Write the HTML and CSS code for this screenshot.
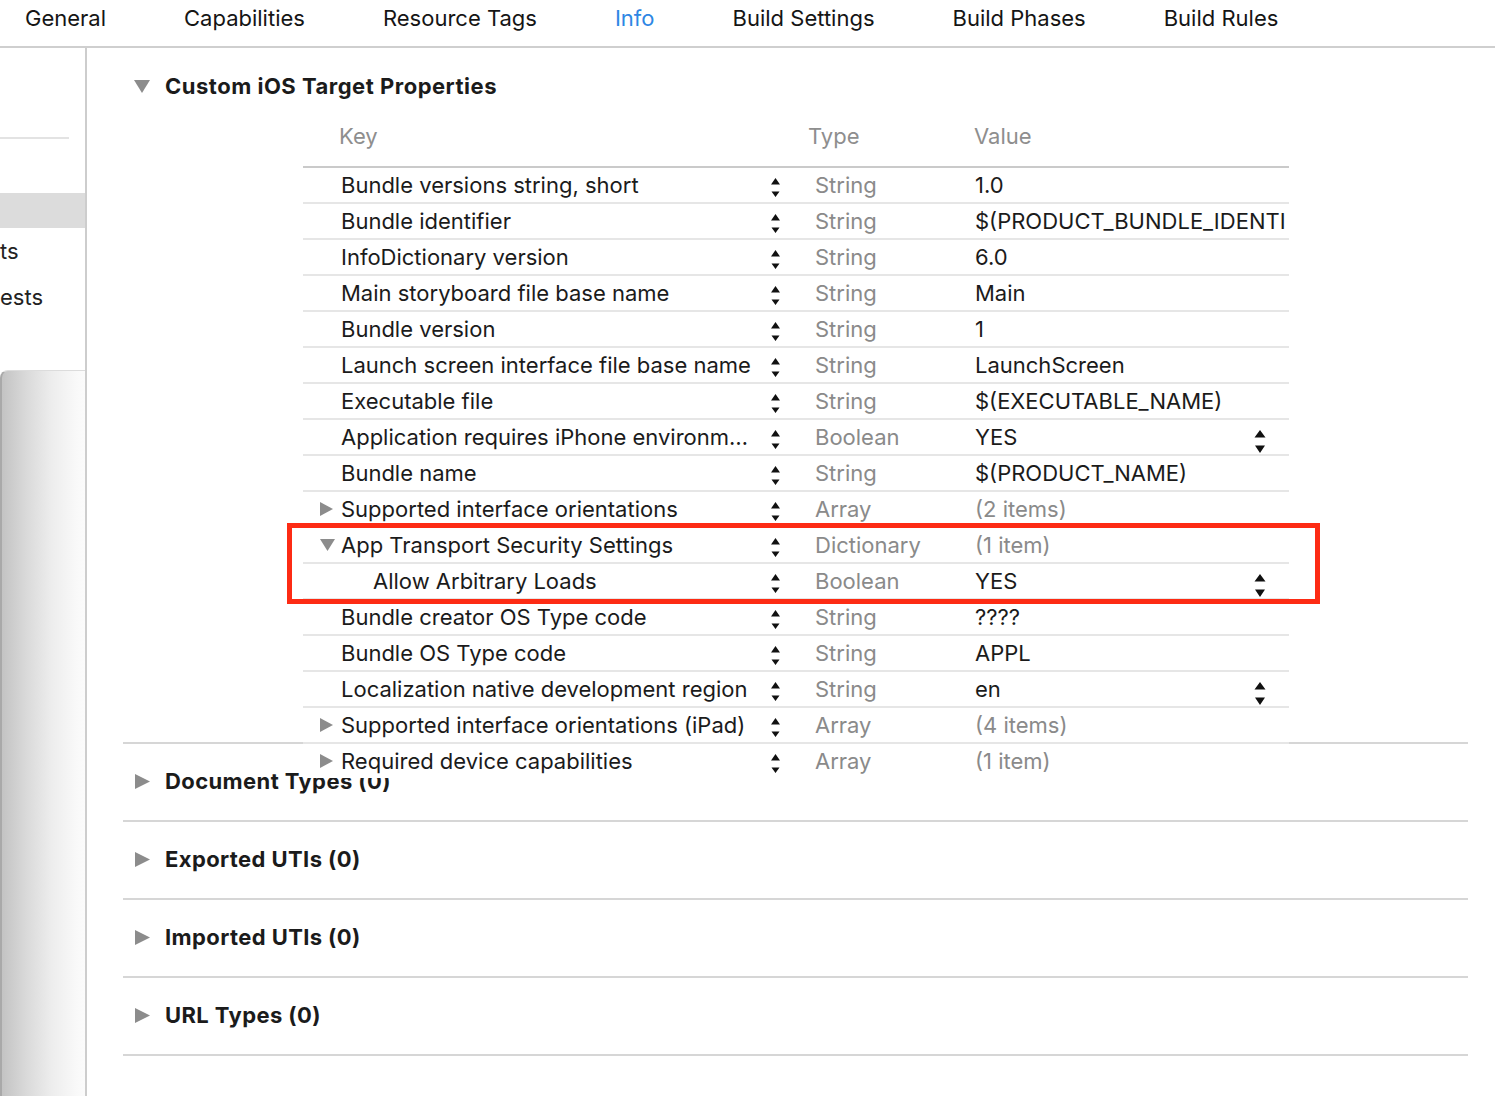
FILE: index.html
```html
<!DOCTYPE html>
<html>
<head>
<meta charset="utf-8">
<link rel="stylesheet" href="styles.css">
</head>
<body>
<div class="tabs">
  <span class="tab">General</span>
  <span class="tab">Capabilities</span>
  <span class="tab">Resource Tags</span>
  <span class="tab active">Info</span>
  <span class="tab">Build Settings</span>
  <span class="tab">Build Phases</span>
  <span class="tab">Build Rules</span>
</div>
<div class="main">
  <aside class="sidebar">
    <div class="sb-rule"></div>
    <div class="sb-selected"></div>
    <div class="sb-item">ts</div>
    <div class="sb-item">ests</div>
    <div class="sb-panel"></div>
  </aside>
  <section class="content">
    <div class="custom">
      <div class="sec-head">
        <svg class="disc-big" width="16" height="13" viewBox="0 0 16 13"><path d="M0 0H16L8 13Z" fill="#8c8c8c"/></svg>
        <span>Custom iOS Target Properties</span>
      </div>
      <div class="plist">
        <div class="plist-head">
          <span class="h-key">Key</span>
          <span class="h-type">Type</span>
          <span class="h-value">Value</span>
        </div>
        <div class="row"><div class="key"><i class="slot"></i>Bundle versions string, short</div><div class="stp"><svg width="9" height="19" viewBox="0 0 9 19"><path d="M0 6.5L4.5 0L9 6.5Z M0.5 13.5L4.5 19L8.5 13.5Z" fill="#111"/></svg></div><div></div><div class="type">String</div><div class="val"><span class="vt">1.0</span></div></div>
        <div class="row"><div class="key"><i class="slot"></i>Bundle identifier</div><div class="stp"><svg width="9" height="19" viewBox="0 0 9 19"><path d="M0 6.5L4.5 0L9 6.5Z M0.5 13.5L4.5 19L8.5 13.5Z" fill="#111"/></svg></div><div></div><div class="type">String</div><div class="val"><span class="vt">$(PRODUCT_BUNDLE_IDENTI</span></div></div>
        <div class="row"><div class="key"><i class="slot"></i>InfoDictionary version</div><div class="stp"><svg width="9" height="19" viewBox="0 0 9 19"><path d="M0 6.5L4.5 0L9 6.5Z M0.5 13.5L4.5 19L8.5 13.5Z" fill="#111"/></svg></div><div></div><div class="type">String</div><div class="val"><span class="vt">6.0</span></div></div>
        <div class="row"><div class="key"><i class="slot"></i>Main storyboard file base name</div><div class="stp"><svg width="9" height="19" viewBox="0 0 9 19"><path d="M0 6.5L4.5 0L9 6.5Z M0.5 13.5L4.5 19L8.5 13.5Z" fill="#111"/></svg></div><div></div><div class="type">String</div><div class="val"><span class="vt">Main</span></div></div>
        <div class="row"><div class="key"><i class="slot"></i>Bundle version</div><div class="stp"><svg width="9" height="19" viewBox="0 0 9 19"><path d="M0 6.5L4.5 0L9 6.5Z M0.5 13.5L4.5 19L8.5 13.5Z" fill="#111"/></svg></div><div></div><div class="type">String</div><div class="val"><span class="vt">1</span></div></div>
        <div class="row"><div class="key"><i class="slot"></i>Launch screen interface file base name</div><div class="stp"><svg width="9" height="19" viewBox="0 0 9 19"><path d="M0 6.5L4.5 0L9 6.5Z M0.5 13.5L4.5 19L8.5 13.5Z" fill="#111"/></svg></div><div></div><div class="type">String</div><div class="val"><span class="vt">LaunchScreen</span></div></div>
        <div class="row"><div class="key"><i class="slot"></i>Executable file</div><div class="stp"><svg width="9" height="19" viewBox="0 0 9 19"><path d="M0 6.5L4.5 0L9 6.5Z M0.5 13.5L4.5 19L8.5 13.5Z" fill="#111"/></svg></div><div></div><div class="type">String</div><div class="val"><span class="vt">$(EXECUTABLE_NAME)</span></div></div>
        <div class="row"><div class="key"><i class="slot"></i>Application requires iPhone environm…</div><div class="stp"><svg width="9" height="19" viewBox="0 0 9 19"><path d="M0 6.5L4.5 0L9 6.5Z M0.5 13.5L4.5 19L8.5 13.5Z" fill="#111"/></svg></div><div></div><div class="type">Boolean</div><div class="val"><span class="vt">YES</span><svg class="vstp" width="12" height="23" viewBox="0 0 12 23"><path d="M0.5 7.5L6 0L11.5 7.5Z M1 15.5L6 23L11 15.5Z" fill="#111"/></svg></div></div>
        <div class="row"><div class="key"><i class="slot"></i>Bundle name</div><div class="stp"><svg width="9" height="19" viewBox="0 0 9 19"><path d="M0 6.5L4.5 0L9 6.5Z M0.5 13.5L4.5 19L8.5 13.5Z" fill="#111"/></svg></div><div></div><div class="type">String</div><div class="val"><span class="vt">$(PRODUCT_NAME)</span></div></div>
        <div class="row"><div class="key"><i class="slot"><svg width="13" height="14" viewBox="0 0 13 14"><path d="M0 0L13 7L0 14Z" fill="#8c8c8c"/></svg></i>Supported interface orientations</div><div class="stp"><svg width="9" height="19" viewBox="0 0 9 19"><path d="M0 6.5L4.5 0L9 6.5Z M0.5 13.5L4.5 19L8.5 13.5Z" fill="#111"/></svg></div><div></div><div class="type">Array</div><div class="val dim"><span class="vt">(2 items)</span></div></div>
        <div class="row"><div class="key"><i class="slot"><svg width="15" height="12" viewBox="0 0 15 12"><path d="M0 0H15L7.5 12Z" fill="#8c8c8c"/></svg></i>App Transport Security Settings</div><div class="stp"><svg width="9" height="19" viewBox="0 0 9 19"><path d="M0 6.5L4.5 0L9 6.5Z M0.5 13.5L4.5 19L8.5 13.5Z" fill="#111"/></svg></div><div></div><div class="type">Dictionary</div><div class="val dim"><span class="vt">(1 item)</span></div></div>
        <div class="row"><div class="key child">Allow Arbitrary Loads</div><div class="stp"><svg width="9" height="19" viewBox="0 0 9 19"><path d="M0 6.5L4.5 0L9 6.5Z M0.5 13.5L4.5 19L8.5 13.5Z" fill="#111"/></svg></div><div></div><div class="type">Boolean</div><div class="val"><span class="vt">YES</span><svg class="vstp" width="12" height="23" viewBox="0 0 12 23"><path d="M0.5 7.5L6 0L11.5 7.5Z M1 15.5L6 23L11 15.5Z" fill="#111"/></svg></div></div>
        <div class="row"><div class="key"><i class="slot"></i>Bundle creator OS Type code</div><div class="stp"><svg width="9" height="19" viewBox="0 0 9 19"><path d="M0 6.5L4.5 0L9 6.5Z M0.5 13.5L4.5 19L8.5 13.5Z" fill="#111"/></svg></div><div></div><div class="type">String</div><div class="val"><span class="vt">????</span></div></div>
        <div class="row"><div class="key"><i class="slot"></i>Bundle OS Type code</div><div class="stp"><svg width="9" height="19" viewBox="0 0 9 19"><path d="M0 6.5L4.5 0L9 6.5Z M0.5 13.5L4.5 19L8.5 13.5Z" fill="#111"/></svg></div><div></div><div class="type">String</div><div class="val"><span class="vt">APPL</span></div></div>
        <div class="row"><div class="key"><i class="slot"></i>Localization native development region</div><div class="stp"><svg width="9" height="19" viewBox="0 0 9 19"><path d="M0 6.5L4.5 0L9 6.5Z M0.5 13.5L4.5 19L8.5 13.5Z" fill="#111"/></svg></div><div></div><div class="type">String</div><div class="val"><span class="vt">en</span><svg class="vstp" width="12" height="23" viewBox="0 0 12 23"><path d="M0.5 7.5L6 0L11.5 7.5Z M1 15.5L6 23L11 15.5Z" fill="#111"/></svg></div></div>
        <div class="row"><div class="key"><i class="slot"><svg width="13" height="14" viewBox="0 0 13 14"><path d="M0 0L13 7L0 14Z" fill="#8c8c8c"/></svg></i>Supported interface orientations (iPad)</div><div class="stp"><svg width="9" height="19" viewBox="0 0 9 19"><path d="M0 6.5L4.5 0L9 6.5Z M0.5 13.5L4.5 19L8.5 13.5Z" fill="#111"/></svg></div><div></div><div class="type">Array</div><div class="val dim"><span class="vt">(4 items)</span></div></div>
        <div class="row last"><div class="key"><i class="slot"><svg width="13" height="14" viewBox="0 0 13 14"><path d="M0 0L13 7L0 14Z" fill="#8c8c8c"/></svg></i>Required device capabilities</div><div class="stp"><svg width="9" height="19" viewBox="0 0 9 19"><path d="M0 6.5L4.5 0L9 6.5Z M0.5 13.5L4.5 19L8.5 13.5Z" fill="#111"/></svg></div><div></div><div class="type">Array</div><div class="val dim"><span class="vt">(1 item)</span></div></div>
        <div class="highlight"></div>
      </div>
    </div>
    <div class="sec"><svg width="15" height="15" viewBox="0 0 15 15"><path d="M0 0L15 7.5L0 15Z" fill="#8c8c8c"/></svg><span>Document Types (0)</span></div>
    <div class="sec"><svg width="15" height="15" viewBox="0 0 15 15"><path d="M0 0L15 7.5L0 15Z" fill="#8c8c8c"/></svg><span>Exported UTIs (0)</span></div>
    <div class="sec"><svg width="15" height="15" viewBox="0 0 15 15"><path d="M0 0L15 7.5L0 15Z" fill="#8c8c8c"/></svg><span>Imported UTIs (0)</span></div>
    <div class="sec"><svg width="15" height="15" viewBox="0 0 15 15"><path d="M0 0L15 7.5L0 15Z" fill="#8c8c8c"/></svg><span>URL Types (0)</span></div>
  </section>
</div>
</body>
</html>
```
FILE: styles.css
```css
* { box-sizing: border-box; }
html, body { margin: 0; padding: 0; }
body {
  width: 1495px;
  height: 1096px;
  overflow: hidden;
  background: #fff;
  color: #1b1b1b;
  font-family: Inter, "Noto Sans", sans-serif;
  font-size: 22px;
}
.tabs {
  display: flex;
  gap: 78px;
  padding-left: 25px;
  height: 48px;
  border-bottom: 2px solid #cfcfcf;
  line-height: 36px;
  font-size: 22px;
  color: #151515;
}
.tab.active { color: #2e86e4; }
.main {
  display: flex;
  height: 1048px;
}
.sidebar {
  width: 87px;
  flex: none;
  border-right: 2px solid #cdcdcd;
  display: flex;
  flex-direction: column;
  overflow: hidden;
  color: #222;
}
.sb-rule {
  margin-top: 89px;
  width: 69px;
  height: 2px;
  background: #e3e3e3;
}
.sb-selected {
  margin-top: 54px;
  height: 35px;
  background: #dcdcdc;
}
.sb-item {
  height: 46px;
  line-height: 46px;
  white-space: nowrap;
}
.sb-panel {
  margin-top: 50px;
  flex: 1;
  border-left: 2px solid #a9a9a9;
  border-top: 1px solid #dcdcdc;
  border-top-left-radius: 8px;
  background: linear-gradient(to right, #c3c3c3 0%, #dadada 30%, #ededed 60%, #f9f9f9 90%, #fbfbfb 100%);
}
.content {
  flex: 1;
  padding: 0 27px 0 36px;
}
.custom {
  height: 696px;
  border-bottom: 2px solid #d6d6d6;
  padding-top: 23px;
}
.sec-head {
  display: flex;
  align-items: center;
  height: 30px;
  font-weight: 700;
  font-size: 22px;
  letter-spacing: 0.5px;
}
.disc-big { margin-left: 11px; margin-right: 15px; }
.plist {
  position: relative;
  z-index: 1;
  margin-top: 5px;
  margin-left: 180px;
  width: 986px;
}
.plist-head {
  display: flex;
  height: 62px;
  line-height: 60px;
  border-bottom: 2px solid #cacaca;
  color: #8e8e8e;
  background: #fff;
}
.h-key { margin-left: 36px; width: 469px; }
.h-type { width: 166px; }
.row {
  display: grid;
  grid-template-columns: 464px 16px 32px 160px 314px;
  height: 36px;
  border-bottom: 2px solid #e6e6e6;
  background: #fff;
  line-height: 34px;
  white-space: nowrap;
}
.row.last { border-bottom: none; height: 34px; }
.key {
  display: flex;
  align-items: center;
  padding-left: 17px;
  overflow: hidden;
}
.key.child { padding-left: 70px; }
.slot {
  display: flex;
  align-items: center;
  width: 15px;
  margin-right: 6px;
  flex: none;
}
.stp {
  display: flex;
  justify-content: center;
  padding-top: 10px;
}
.stp svg { display: block; }
.type { color: #8a8a8a; }
.val {
  display: flex;
  justify-content: space-between;
  overflow: hidden;
}
.vt { flex: none; }
.val.dim { color: #8a8a8a; }
.vstp { flex: none; margin-top: 10px; margin-right: 23px; }
.highlight {
  position: absolute;
  left: -16px;
  top: 417px;
  width: 1033px;
  height: 81px;
  border: 5px solid #fd2b14;
  z-index: 2;
}
.sec {
  display: flex;
  align-items: center;
  height: 78px;
  border-bottom: 2px solid #d6d6d6;
  padding-bottom: 2px;
  font-weight: 700;
  font-size: 22px;
  letter-spacing: 0.4px;
}
.sec svg { margin-left: 12px; margin-right: 15px; flex: none; }
```
